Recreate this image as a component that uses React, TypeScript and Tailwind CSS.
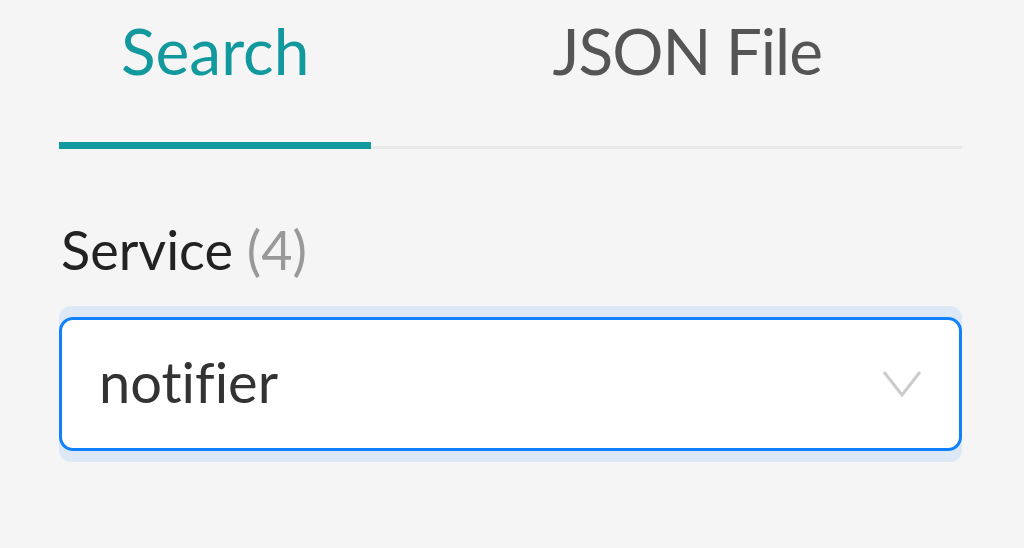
import React from "react";

const App = () => {
  return (
    <div
      className="min-h-[548px] w-[1024px] bg-[#f5f5f5] pl-[59px] pr-[62px] [font-variant-ligatures:none]"
      style={{ fontFamily: "Lato, 'Open Sans', sans-serif" }}
    >
      {/* tabs */}
      <div className="flex items-start border-b-[3px] border-[#e8e8e8]">
        <div className="-mb-[3px] border-b-[7px] border-[#12999d] px-[62px] pt-[19px] pb-[59px] text-[64px] leading-none text-[#12999d]">
          Search
        </div>
        <div className="ml-[119px] px-[62px] pt-[19px] text-[64px] leading-none tracking-[-1px] text-[#555555]">
          JSON File
        </div>
      </div>

      {/* service field */}
      <div className="mt-[74px] pl-[2px] text-[54px] leading-none text-[#222222]">
        Service <span className="text-[#999999]">(4)</span>
      </div>

      <div className="mt-[29px] rounded-[12px] bg-[#dce8f6] py-[11px]">
        <div className="flex h-[134px] items-center justify-between rounded-[14px] border-[3px] border-[#1181fb] bg-white pl-[37px] pr-[37px]">
          <span className="pb-[4px] text-[56px] leading-none text-[#333333]">notifier</span>
          <svg width="40" height="28" viewBox="0 0 40 28" fill="none">
            <path d="M2 2 L20 25 L38 2" stroke="#cccccc" strokeWidth="3" />
          </svg>
        </div>
      </div>
    </div>
  );
};

export default App;
